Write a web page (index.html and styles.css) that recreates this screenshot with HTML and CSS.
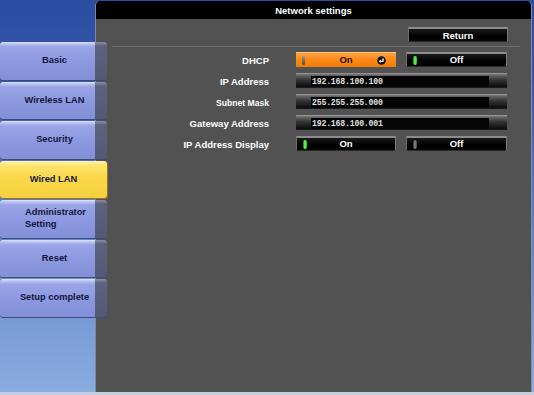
FILE: index.html
```html
<!DOCTYPE html>
<html lang="en">
<head>
    <meta charset="UTF-8">
    <meta name="viewport" content="width=device-width, initial-scale=1.0">
    <title>Network settings</title>
    <link rel="stylesheet" href="styles.css">
</head>
<body>
    <div class="screen">
        <!-- 左侧菜单 -->
        <nav class="menu">
            <div class="tab"><span class="tab-label">Basic</span><span class="tab-edge"></span></div>
            <div class="tab"><span class="tab-label">Wireless LAN</span><span class="tab-edge"></span></div>
            <div class="tab"><span class="tab-label">Security</span><span class="tab-edge"></span></div>
            <div class="tab active"><span class="tab-label">Wired LAN</span><span class="tab-edge"></span></div>
            <div class="tab"><span class="tab-label two-line">Administrator<br>Setting</span><span class="tab-edge"></span></div>
            <div class="tab"><span class="tab-label">Reset</span><span class="tab-edge"></span></div>
            <div class="tab"><span class="tab-label">Setup complete</span><span class="tab-edge"></span></div>
        </nav>

        <!-- 设置面板 -->
        <section class="panel">
            <div class="panel-head">Network settings</div>
            <div class="return-row">
                <div class="btn return">Return</div>
            </div>
            <div class="sep"></div>

            <div class="form">
                <div class="label">DHCP</div>
                <div class="btn orange">
                    <span class="pill dark"></span>
                    <span class="btn-text">On</span>
                    <svg class="enter" width="9" height="9" viewBox="0 0 9 9">
                        <circle cx="4.5" cy="4.5" r="4.3" fill="#111"/>
                        <path d="M6 2.2 V5.3 H3" stroke="#fff" stroke-width="1.3" fill="none"/>
                        <path d="M3.6 3.6 L1.8 5.3 L3.6 7 Z" fill="#fff"/>
                    </svg>
                </div>
                <div class="btn">
                    <span class="pill green"></span>
                    <span class="btn-text">Off</span>
                    <span></span>
                </div>

                <div class="label">IP Address</div>
                <div class="field"><span class="field-in">192.168.100.100</span></div>

                <div class="label small">Subnet Mask</div>
                <div class="field"><span class="field-in">255.255.255.000</span></div>

                <div class="label">Gateway Address</div>
                <div class="field"><span class="field-in">192.168.100.001</span></div>

                <div class="label">IP Address Display</div>
                <div class="btn">
                    <span class="pill green"></span>
                    <span class="btn-text">On</span>
                    <span></span>
                </div>
                <div class="btn">
                    <span class="pill grey"></span>
                    <span class="btn-text">Off</span>
                    <span></span>
                </div>
            </div>
        </section>
    </div>
    <div class="bottom-strip"></div>
</body>
</html>
```

FILE: styles.css
```css
body {
    margin: 0;
    width: 534px;
    height: 395px;
    overflow: hidden;
    font-family: "Liberation Sans", Arial, sans-serif;
    font-weight: bold;
    background: linear-gradient(#2a4ca1 0, #3659ae 20%, #6386c7 60%, #8cade0 100%);
}
.screen {
    display: flex;
    height: 392px;
}
.menu {
    position: relative;
    z-index: 1;
    width: 95px;
    flex: none;
    padding-top: 42px;
    display: flex;
    flex-direction: column;
    gap: 2px;
}
.tab {
    display: flex;
    width: 107px;
    height: 37.5px;
    flex: none;
    border-radius: 3px;
    overflow: hidden;
    box-shadow: 0 1px 0 #3e4a7a;
}
.tab-label {
    width: 95px;
    flex: none;
    display: flex;
    align-items: center;
    justify-content: center;
    box-sizing: border-box;
    padding-left: 14px;
    padding-bottom: 1px;
    font-size: 9.3px;
    color: #12163a;
    background: linear-gradient(#e2e6fb 0, #b9c2f2 2px, #9aa5e6 5px, #8a96de 60%, #8390d8 100%);
}
.tab-label.two-line {
    justify-content: flex-start;
    padding-left: 25px;
    line-height: 12px;
}
.tab-edge {
    flex: 1;
    background: linear-gradient(#8a8ea8 0, #5d627f 4px, #535873 100%);
}
.tab.active .tab-label,
.tab.active .tab-edge {
    background: linear-gradient(#fff4b8 0, #ffe879 3px, #fbd94a 40%, #f5cf3c 100%);
}
.tab.active {
    box-shadow: 1px 1px 0 #9a7420;
}
.tab.active .tab-label {
    padding-left: 12px;
}

.panel {
    width: 437px;
    height: 391px;
    margin-top: 1px;
    box-sizing: border-box;
    background: #525252;
    border-radius: 5px 5px 0 0;
    border-left: 1px solid #7888a8;
    border-right: 1px solid #7e8ca8;
    overflow: hidden;
}
.panel-head {
    height: 18px;
    background: #000;
    color: #fff;
    font-size: 9.5px;
    text-align: center;
    line-height: 19px;
}
.return-row {
    display: flex;
    justify-content: flex-end;
    padding: 8px 23px 0 0;
}
.sep {
    height: 1px;
    margin: 4px 11px 0 16px;
    background: #6e6e6e;
}

.form {
    display: grid;
    grid-template-columns: 162px 100px 101px;
    grid-auto-rows: 15px;
    column-gap: 10px;
    row-gap: 6px;
    padding: 5px 0 0 28px;
}
.label {
    color: #fff;
    font-size: 9.5px;
    text-align: right;
    padding-right: 17px;
    line-height: 18px;
}
.label.small {
    font-size: 8.6px;
}

.btn {
    height: 15px;
    box-sizing: border-box;
    display: grid;
    grid-template-columns: 1fr auto 1fr;
    align-items: center;
    padding: 0 5px;
    color: #fff;
    font-size: 9.5px;
    background: linear-gradient(#1a1a1a, #000 60%, #050505);
    border-top: 2px solid #8c8c8c;
    border-left: 1px solid #6c6c6c;
    border-right: 1px solid #7a7a7a;
    border-bottom: 1px solid #2a2a2a;
}
.btn.return {
    width: 100px;
    grid-template-columns: 1fr;
    text-align: center;
}
.btn-text {
    text-align: center;
    line-height: 12px;
}
.btn.orange {
    color: #1a1208;
    border: none;
    border-top: 1px solid #ffc27a;
    background: linear-gradient(#ffa345 0, #ff8c1c 40%, #f27a05 100%);
}
.enter {
    justify-self: end;
    margin-right: 5px;
}
.pill {
    justify-self: start;
    width: 4px;
    height: 9px;
    border-radius: 2px;
}
.pill.green {
    background: linear-gradient(to right, #0c6a0c, #6bff5c 45%, #1fbe18);
    margin-left: 1px;
}
.pill.dark {
    width: 3px;
    margin-left: 1px;
    background: linear-gradient(#a09080, #5a4a3c);
}
.pill.grey {
    background: linear-gradient(to right, #2a2a2a, #8a8a8a 45%, #444);
    margin-left: 1px;
}

.field {
    grid-column: 2 / 4;
    height: 15px;
    display: flex;
    padding: 3px 18px 0 15px;
    box-sizing: border-box;
    background: linear-gradient(#a0a0a0 0, #666 2px, #333 7px, #0c0c0c 100%);
    border-bottom: 1px solid #1a1a1a;
}
.field-in {
    flex: 1;
    background: #050505;
    color: #e0e0e0;
    font-family: "Liberation Mono", "DejaVu Sans Mono", monospace;
    font-weight: bold;
    font-size: 8.2px;
    letter-spacing: -0.2px;
    line-height: 12px;
    padding-left: 1px;
}

.bottom-strip {
    height: 3px;
    background: #c4cede;
}
```
